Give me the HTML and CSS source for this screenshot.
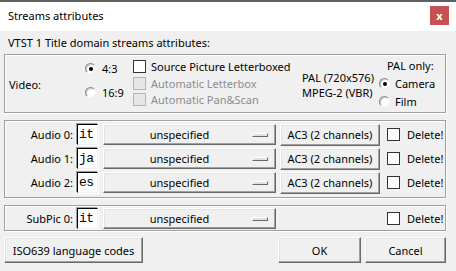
FILE: index.html
```html
<!DOCTYPE html>
<html>
<head>
<meta charset="utf-8">
<link rel="stylesheet" href="styles.css">
</head>
<body>
<div class="window">
  <div class="titlebar">
    <span class="title">Streams attributes</span>
    <span class="close">x</span>
  </div>
  <div class="content">
    <div class="heading">VTST 1 Title domain streams attributes:</div>

    <div class="group video">
      <div class="vlabel">Video:</div>
      <div class="vradios">
        <div class="opt"><span class="radio on"></span><span>4:3</span></div>
        <div class="opt"><span class="radio"></span><span>16:9</span></div>
      </div>
      <div class="vchecks">
        <div class="opt"><span class="check"></span><span>Source Picture Letterboxed</span></div>
        <div class="opt dis"><span class="check"></span><span>Automatic Letterbox</span></div>
        <div class="opt dis"><span class="check"></span><span>Automatic Pan&amp;Scan</span></div>
      </div>
      <div class="vinfo">
        <div>PAL (720x576)</div>
        <div>MPEG-2 (VBR)</div>
      </div>
      <div class="vpal">
        <div class="palhead">PAL only:</div>
        <div class="opt"><span class="radio on"></span><span>Camera</span></div>
        <div class="opt"><span class="radio"></span><span>Film</span></div>
      </div>
    </div>

    <div class="group audio">
      <div class="row">
        <span class="rlabel">Audio 0:</span>
        <span class="field">it</span>
        <span class="drop">unspecified<span class="ind"></span></span>
        <span class="btn ac3">AC3 (2 channels)</span>
        <span class="opt del"><span class="check"></span><span>Delete!</span></span>
      </div>
      <div class="row">
        <span class="rlabel">Audio 1:</span>
        <span class="field">ja</span>
        <span class="drop">unspecified<span class="ind"></span></span>
        <span class="btn ac3">AC3 (2 channels)</span>
        <span class="opt del"><span class="check"></span><span>Delete!</span></span>
      </div>
      <div class="row">
        <span class="rlabel">Audio 2:</span>
        <span class="field">es</span>
        <span class="drop">unspecified<span class="ind"></span></span>
        <span class="btn ac3">AC3 (2 channels)</span>
        <span class="opt del"><span class="check"></span><span>Delete!</span></span>
      </div>
    </div>

    <div class="group subpic">
      <div class="row">
        <span class="rlabel">SubPic 0:</span>
        <span class="field">it</span>
        <span class="drop">unspecified<span class="ind"></span></span>
        <span class="spacer"></span>
        <span class="opt del"><span class="check"></span><span>Delete!</span></span>
      </div>
    </div>

    <div class="buttons">
      <span class="btn iso">ISO639 language codes</span>
      <span class="grow"></span>
      <span class="btn ok">OK</span>
      <span class="btn cancel">Cancel</span>
    </div>
  </div>
</div>
</body>
</html>
```

FILE: styles.css
```css
* { box-sizing: border-box; }
html, body { margin: 0; padding: 0; }
body {
  font-family: "Noto Sans", "DejaVu Sans", sans-serif;
  font-size: 11px;
  color: #000;
  background: #f0f0f0;
}
.window {
  width: 456px;
  height: 271px;
  background: #f0f0f0;
  overflow: hidden;
}
.titlebar {
  height: 31px;
  background: #fff;
  border-top: 2px solid #5f5f5f;
  display: flex;
  align-items: center;
  padding-left: 8px;
  padding-right: 7px;
}
.title { flex: 1; margin-top: -3px; }
.close {
  width: 19px;
  height: 19px;
  background: #c75050;
  color: #fff;
  font-weight: bold;
  font-size: 11px;
  display: flex;
  align-items: center;
  justify-content: center;
  margin-top: -3px;
  line-height: 1;
}
.content { padding: 0 10px 0 4px; }
.heading { height: 23px; line-height: 23px; padding-left: 4px; }

.group {
  border: 1px solid #a0a0a0;
  box-shadow: inset 1px 1px #fff, 1px 1px #fff;
}

/* video */
.video {
  height: 59px;
  display: flex;
  align-items: stretch;
}
.vlabel {
  width: 80px;
  padding-left: 4px;
  display: flex;
  align-items: center;
  padding-top: 2px;
}
.opt { display: flex; align-items: center; white-space: nowrap; }
.vradios {
  width: 48px;
  display: flex;
  flex-direction: column;
  justify-content: space-between;
  padding: 6px 0 12px;
}
.vradios .opt { gap: 6px; }
.vchecks {
  width: 169px;
  display: flex;
  flex-direction: column;
  justify-content: space-between;
  padding: 4px 0 5px;
}
.vchecks .opt { gap: 5px; }
.dis { color: #8d8d8d; }
.dis .check { background: #e6e6e6; border-color: #b5b5b5; }
.vinfo {
  width: 77px;
  display: flex;
  flex-direction: column;
  justify-content: center;
  line-height: 15px;
  padding-top: 2px;
  white-space: nowrap;
}
.vpal {
  flex: 1;
  display: flex;
  flex-direction: column;
  justify-content: space-between;
  padding: 3px 0 3px;
}
.palhead { padding-left: 8px; }
.vpal .opt { gap: 5px; }

.radio {
  width: 11px;
  height: 11px;
  border-radius: 50%;
  background: #fff;
  border: 1px solid;
  border-color: #8a8a8a #f4f4f4 #f4f4f4 #8a8a8a;
  box-shadow: inset 1px 1px #c8c8c8;
  position: relative;
  flex: none;
}
.radio.on::after {
  content: "";
  position: absolute;
  left: 2.5px;
  top: 2.5px;
  width: 4px;
  height: 4px;
  border-radius: 50%;
  background: #000;
}
.check {
  width: 13px;
  height: 13px;
  background: #fff;
  border: 1px solid #333;
  flex: none;
}

/* audio */
.audio {
  margin-top: 7px;
  height: 78px;
  padding: 3px 0 0;
  display: flex;
  flex-direction: column;
  gap: 3px;
}
.row {
  display: flex;
  align-items: center;
  height: 21px;
}
.rlabel {
  width: 68px;
  text-align: right;
  margin-right: 4px;
}
.field {
  width: 21px;
  height: 21px;
  background: #fff;
  border: 1px solid;
  border-color: #000 #f0f0f0 #f0f0f0 #000;
  box-shadow: -1px -1px #a0a0a0, 1px 1px #fff;
  font-family: "Liberation Mono", monospace;
  font-size: 13px;
  line-height: 19px;
  padding-left: 1px;
  letter-spacing: -0.5px;
}
.drop {
  margin-left: 5px;
  width: 173px;
  height: 21px;
  position: relative;
  display: flex;
  align-items: center;
  justify-content: center;
  border: 1px solid;
  border-color: #fff #696969 #696969 #fff;
  box-shadow: inset -1px -1px #a0a0a0, inset 1px 1px #e3e3e3;
  padding-right: 20px;
}
.ind {
  position: absolute;
  right: 7px;
  top: 8px;
  width: 16px;
  height: 4px;
  border: 1px solid;
  border-color: #fff #696969 #696969 #fff;
  background: #e0e0e0;
}
.btn {
  display: flex;
  align-items: center;
  justify-content: center;
  border: 1px solid;
  border-color: #fff #696969 #696969 #fff;
  box-shadow: inset -1px -1px #a0a0a0, inset 1px 1px #e3e3e3;
  background: #f0f0f0;
  white-space: nowrap;
}
.ac3 {
  margin-left: 4px;
  width: 100px;
  height: 22px;
}
.del { margin-left: 7px; gap: 7px; }
.spacer { width: 104px; }

.subpic {
  margin-top: 7px;
  height: 26px;
  display: flex;
  align-items: center;
}

.buttons {
  margin-top: 6px;
  display: flex;
  height: 26px;
}
.iso { width: 139px; height: 26px; }
.grow { flex: 1; }
.ok { width: 83px; height: 26px; margin-right: 4px; }
.cancel { width: 81px; height: 26px; }
```
